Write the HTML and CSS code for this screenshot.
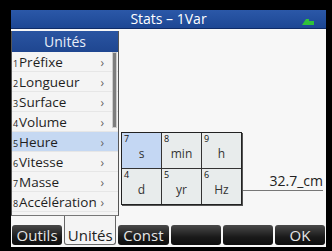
FILE: index.html
```html
<!DOCTYPE html>
<html lang="fr">
<head>
  <meta charset="UTF-8">
  <title>Stats - 1Var</title>
  <link rel="stylesheet" href="styles.css">
</head>
<body>
  <div class="screen">

    <header class="titlebar">
      <span></span>
      <span class="title">Stats – 1Var</span>
      <svg class="batt" width="12" height="7" viewBox="0 0 12 7">
        <polygon points="0,7 4,1 7,1 7,3 12,3 12,7" fill="#2fc23a" />
      </svg>
    </header>

    <section class="view">
      <div class="field">32.7_cm</div>
    </section>

    <!-- Units menu -->
    <div class="menu">
      <div class="menu-head">Unités</div>
      <div class="menu-item"><span class="num">1</span>Préfixe<span class="arr">›</span></div>
      <div class="menu-item"><span class="num">2</span>Longueur<span class="arr">›</span></div>
      <div class="menu-item"><span class="num">3</span>Surface<span class="arr">›</span></div>
      <div class="menu-item"><span class="num">4</span>Volume<span class="arr">›</span></div>
      <div class="menu-item selected"><span class="num">5</span>Heure<span class="arr">›</span></div>
      <div class="menu-item"><span class="num">6</span>Vitesse<span class="arr">›</span></div>
      <div class="menu-item"><span class="num">7</span>Masse<span class="arr">›</span></div>
      <div class="menu-item"><span class="num">8</span>Accélération<span class="arr">›</span></div>
      <div class="scroll"></div>
    </div>

    <!-- Time sub menu -->
    <div class="submenu">
      <div class="cell selected"><span class="cnum">7</span>s</div>
      <div class="cell"><span class="cnum">8</span>min</div>
      <div class="cell"><span class="cnum">9</span>h</div>
      <div class="cell"><span class="cnum">4</span>d</div>
      <div class="cell"><span class="cnum">5</span>yr</div>
      <div class="cell"><span class="cnum">6</span>Hz</div>
    </div>

    <nav class="softkeys">
      <div class="key">Outils</div>
      <div class="key active">Unités</div>
      <div class="key">Const</div>
      <div class="key"></div>
      <div class="key"></div>
      <div class="key">OK</div>
    </nav>

  </div>
</body>
</html>
```

FILE: styles.css
```css
body {
  margin: 0;
  background-color: #000;
  width: 332px;
  height: 251px;
  overflow: hidden;
  font-family: 'Open Sans', 'Noto Sans', sans-serif;
}

.screen {
  margin: 10px 6px 0 11px;
  width: 315px;
  height: 237px;
  background-color: #f7f7f7;
  display: flex;
  flex-direction: column;
  position: relative;
}

/* Title bar */
.titlebar {
  height: 18px;
  background: linear-gradient(#2b58a8, #1d4794);
  border-bottom: 1px solid #0f2c68;
  color: #fff;
  font-size: 14px;
  line-height: 18px;
  display: grid;
  grid-template-columns: 1fr auto 1fr;
  align-items: center;
}

.batt {
  justify-self: end;
  margin: 4px 12px 0 0;
}

/* Main view */
.view {
  flex: 1;
  display: flex;
  flex-direction: column;
}

.field {
  margin: 143px 3px 0 auto;
  width: 84px;
  height: 18px;
  border-bottom: 1px solid #777;
  text-align: right;
  font-size: 14px;
  line-height: 18px;
  color: #222;
}

/* Units menu */
.menu {
  position: absolute;
  top: 21px;
  left: 0;
  width: 106px;
  padding-bottom: 3px;
  background-color: #f4f4f4;
  border: 1px solid #555;
  border-top: none;
  border-bottom-color: #777;
}

.menu-head {
  height: 21px;
  line-height: 21px;
  background: linear-gradient(#2a55a2, #1f4690);
  color: #e8eef8;
  text-align: center;
  font-size: 14px;
}

.menu-item {
  height: 20px;
  line-height: 20px;
  font-size: 13.5px;
  color: #1e1e1e;
  display: flex;
  align-items: baseline;
  padding-right: 5px;
  border-bottom: 1px solid #e6e6e6;
  box-sizing: border-box;
}

.menu-item.selected {
  background-color: #c5d8f2;
}

.num {
  font-size: 9px;
  width: 6px;
  padding-left: 1px;
}

.arr {
  margin-left: auto;
  margin-right: 9px;
  color: #666;
  font-size: 12px;
}

.scroll {
  position: absolute;
  top: 21px;
  right: 1px;
  width: 3px;
  height: 74px;
  background-color: #7d7d7d;
  border: 1px solid #ccc;
}

/* Time sub menu */
.submenu {
  position: absolute;
  top: 122px;
  left: 110px;
  display: grid;
  grid-template-columns: repeat(3, 39px);
  grid-auto-rows: 35px;
  gap: 1px;
  background-color: #333;
  border: 1px solid #222;
  box-shadow: 1px 1px 0 #555;
}

.cell {
  position: relative;
  background-color: #e8ecec;
  font-size: 12px;
  color: #333;
  text-align: center;
  padding-top: 12px;
  box-sizing: border-box;
}

.cell.selected {
  background-color: #c4d7f3;
}

.cnum {
  position: absolute;
  top: -1px;
  left: 2px;
  font-size: 9px;
  color: #111;
}

/* Soft keys */
.softkeys {
  height: 22px;
  display: flex;
  align-items: flex-start;
  gap: 2px;
  padding: 0 1px;
}

.key {
  flex: 1;
  height: 20px;
  line-height: 20px;
  background: linear-gradient(#4a4a4a, #1a1a1a 60%, #0e0e0e);
  border-radius: 3px;
  color: #e6e6e6;
  font-size: 15px;
  text-align: center;
}

.key.active {
  margin-top: -9px;
  height: 29px;
  line-height: 38px;
  background: #f4f4f4;
  color: #222;
  border: 1px solid #666;
  border-top: none;
  border-radius: 0 0 3px 3px;
  box-sizing: border-box;
}
```
